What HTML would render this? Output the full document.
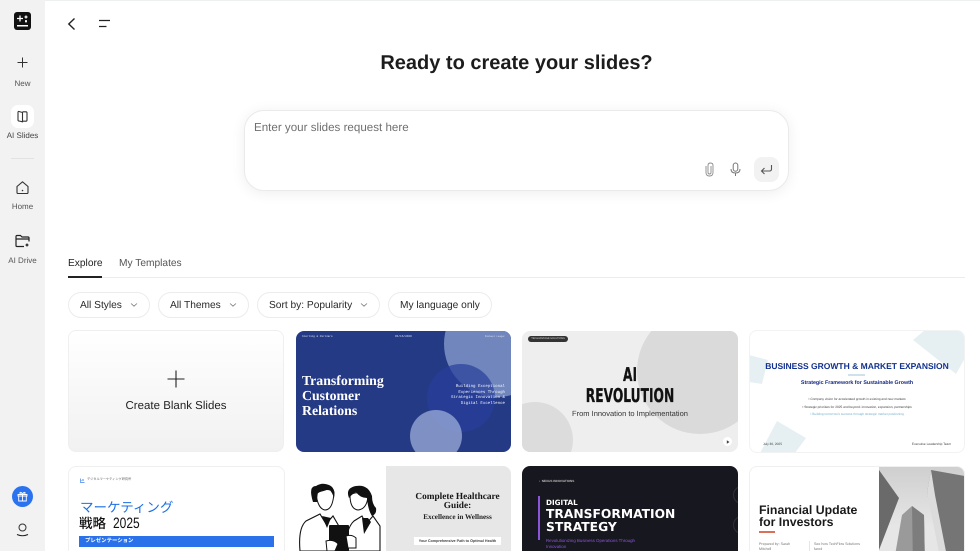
<!DOCTYPE html>
<html lang="en"><head><meta charset="utf-8"><title>AI Slides</title>
<style>
*{box-sizing:border-box;margin:0;padding:0}
html,body{width:980px;height:551px;overflow:hidden;background:#fff}
#page{position:relative;width:980px;height:551px;overflow:hidden;background:#fff;font-family:"Liberation Sans","Noto Sans CJK JP",sans-serif;color:#222;text-rendering:geometricPrecision}
.a{position:absolute;white-space:nowrap}
#side{position:absolute;left:0;top:0;width:45px;height:551px;background:#f2f2f2}
.lab{position:absolute;width:45px;text-align:center;font-size:8px;color:#555;line-height:10px;left:0}
.pill{position:absolute;top:292px;height:26px;border:1px solid #ececec;border-radius:13px;font-size:10.2px;line-height:25px;color:#2a2a2a;background:#fff;padding-left:11px;white-space:nowrap}
.pill svg{position:absolute;top:9px}
.card{position:absolute;overflow:hidden;border-radius:8px}
.card .a{line-height:1}
svg{position:absolute;display:block;overflow:visible}
</style></head><body><div id="page">
<div class="a" style="left:0;top:0;width:980px;height:1px;background:#eef0f0"></div>
<div id="side"></div>

<!-- logo -->
<svg style="left:14px;top:12px" width="17" height="18" viewBox="0 0 17 18"><rect width="17" height="18" rx="3" fill="#111"/><path d="M6 3.500v6M3 6.500h6M12 3.500v3M10.500 5h3M12 8v2.500M11 9.200h2" stroke="#fff" stroke-width="1.300"/><rect x="3" y="13" width="11" height="1.500" fill="#fff"/></svg>
<!-- new -->
<svg style="left:16px;top:56px" width="13" height="13"><path d="M6.500 1.500v10M1.500 6.500h10" stroke="#333" stroke-width="1"/></svg>
<div class="lab" style="top:79px">New</div>
<div class="a" style="left:11px;top:105px;width:23px;height:23px;background:#fff;border-radius:7px"></div>
<svg style="left:16px;top:110px" width="13" height="13" viewBox="0 0 13 13"><path d="M6.500 2.500L3 1.500Q2 1.300 2 2.500V10Q2 11 3 11L6.500 11.800ZM6.500 1.800H10Q11 1.800 11 3V10Q11 11.200 10 11.200H6.500" fill="none" stroke="#333" stroke-width="1.100"/></svg>
<div class="lab" style="top:131px;color:#444">AI Slides</div>
<div class="a" style="left:11px;top:158px;width:23px;height:1px;background:#e2e2e2"></div>
<svg style="left:15px;top:180px" width="15" height="15" viewBox="0 0 15 15"><path d="M2 6.500L7.500 1.800L13 6.500V12.500Q13 13.500 12 13.500H3Q2 13.500 2 12.500Z" fill="none" stroke="#333" stroke-width="1.100"/><circle cx="7.500" cy="10.500" r=".8" fill="#333"/></svg>
<div class="lab" style="top:202px">Home</div>
<svg style="left:15px;top:234px" width="15" height="14" viewBox="0 0 15 14"><path d="M1 11.500V2.500Q1 1.500 2 1.500H5.500L7 3H13Q14 3 14 4V7.500M1 5H14M1 11.500Q1 12.500 2 12.500H9" fill="none" stroke="#222" stroke-width="1.200"/><path d="M12 9l.7 1.300 1.300.7-1.300.7-.7 1.300-.7-1.300-1.300-.7 1.300-.7z" fill="#222"/></svg>
<div class="lab" style="top:256px">AI Drive</div>
<div class="a" style="left:12px;top:486px;width:21px;height:21px;border-radius:50%;background:#2b73ee"></div>
<svg style="left:16px;top:490px" width="13" height="13" viewBox="0 0 13 13"><path d="M2 4.500H11V6H2ZM2.700 6V11H10.300V6M6.500 4.500V11M6.500 4.500Q3.500 4.500 4 2.500Q5.500 1.800 6.500 4.500Q7.500 1.800 9 2.500Q9.500 4.500 6.500 4.500" fill="none" stroke="#fff" stroke-width=".9"/></svg>
<svg style="left:16px;top:522px" width="13" height="16" viewBox="0 0 13 16"><circle cx="6.500" cy="5.500" r="3.500" fill="none" stroke="#333" stroke-width="1"/><path d="M1 12.500Q6.500 15 12 12.500" fill="none" stroke="#222" stroke-width="1.100"/></svg>

<!-- top nav -->
<svg style="left:67px;top:17px" width="10" height="14"><path d="M7.500 1.500L1.800 7L7.500 12.500" fill="none" stroke="#222" stroke-width="1.400"/></svg>
<svg style="left:98px;top:19px" width="13" height="10"><path d="M1 1.500H12M1 7.500H8.500" stroke="#222" stroke-width="1.300"/></svg>

<div class="a" style="left:0;width:1033px;top:51px;text-align:center;font-size:20px;font-weight:bold;line-height:24px;color:#1c1c1c">Ready to create your slides?</div>

<!-- prompt -->
<div class="a" style="left:244px;top:110px;width:545px;height:81px;border:1px solid #eaeaea;border-radius:20px;background:#fff;box-shadow:0 2px 14px rgba(0,0,0,.07)"></div>
<div class="a" style="left:254px;top:120px;font-size:11.6px;line-height:15px;color:#6f6f6f">Enter your slides request here</div>
<svg style="left:703px;top:162px" width="13" height="15" viewBox="0 0 13 15"><path d="M3 4V10.500Q3 14 6.500 14Q10 14 10 10.500V3.500Q10 1 7.500 1Q5 1 5 3.500V10.500Q5 12 6.500 12Q8 12 8 10.500V4" fill="none" stroke="#8b8b8b" stroke-width=".9"/></svg>
<svg style="left:729px;top:162px" width="13" height="15" viewBox="0 0 13 15"><rect x="4.200" y="1" width="4.600" height="8.200" rx="2.300" fill="none" stroke="#777" stroke-width="1"/><path d="M2 7Q2 11 6.500 11Q11 11 11 7M6.500 11V14" fill="none" stroke="#777" stroke-width="1"/></svg>
<div class="a" style="left:754px;top:157px;width:25px;height:25px;border-radius:8px;background:#f2f2f2"></div>
<svg style="left:760px;top:163px" width="13" height="13" viewBox="0 0 13 13"><path d="M11.500 2V6Q11.500 8 9.500 8H1.500M4.500 5L1.500 8L4.500 11" fill="none" stroke="#555" stroke-width="1.100"/></svg>

<!-- tabs -->
<div class="a" style="left:68px;top:257px;font-size:10.200px;line-height:13px;color:#222">Explore</div>
<div class="a" style="left:119px;top:257px;font-size:10.200px;line-height:13px;color:#555">My Templates</div>
<div class="a" style="left:68px;top:277px;width:897px;height:1px;background:#ececec"></div>
<div class="a" style="left:68px;top:276px;width:34px;height:2px;background:#222"></div>

<!-- filters -->
<div class="pill" style="left:68px;width:82px">All Styles<svg style="left:61px" width="8" height="6"><path d="M1 1.500L4 4.200L7 1.500" fill="none" stroke="#777" stroke-width=".8"/></svg></div>
<div class="pill" style="left:158px;width:91px">All Themes<svg style="left:70px" width="8" height="6"><path d="M1 1.500L4 4.200L7 1.500" fill="none" stroke="#777" stroke-width=".8"/></svg></div>
<div class="pill" style="left:257px;width:123px">Sort by: Popularity<svg style="left:102px" width="8" height="6"><path d="M1 1.500L4 4.200L7 1.500" fill="none" stroke="#777" stroke-width=".8"/></svg></div>
<div class="pill" style="left:388px;width:104px;padding-left:11px">My language only</div>

<!-- blank -->
<div class="card" style="left:68px;top:330px;width:216px;height:122px;border:1px solid #efefef;background:linear-gradient(#fff,#f1f1f1)"></div>
<svg style="left:167px;top:370px" width="18" height="18"><path d="M9 .5V17.500M.5 9H17.500" stroke="#222" stroke-width="1.100"/></svg>
<div class="a" style="left:68px;width:216px;top:399px;text-align:center;font-size:11.500px;line-height:15px;color:#222">Create Blank Slides</div>

<!-- card 2 -->
<div class="card" style="left:296px;top:331px;width:215px;height:121px;background:#253a85">
  <div class="a" style="left:148px;top:-40px;width:106px;height:106px;border-radius:50%;background:#7086bd"></div>
  <div class="a" style="left:131px;top:33px;width:68px;height:68px;border-radius:50%;background:rgba(40,62,155,.7)"></div>
  <div class="a" style="left:114px;top:79px;width:52px;height:52px;border-radius:50%;background:rgba(170,185,225,.68)"></div>
  <div class="a" style="left:6px;top:4px;font:2.700px 'Liberation Mono',monospace;color:#dfe5f5">Sterling &amp; Partners</div>
  <div class="a" style="left:99px;top:4px;font:2.800px 'Liberation Mono',monospace;color:#dfe5f5">05/15/2030</div>
  <div class="a" style="right:6px;top:4px;font:2.400px 'Liberation Mono',monospace;color:#dfe5f5">Michael Langer</div>
  <div class="a" style="left:6px;top:42px;font:bold 13.800px/15px 'Liberation Serif',serif;color:#fff">Transforming<br>Customer<br>Relations</div>
  <div class="a" style="right:6px;top:54px;text-align:right;font:4.100px/5.700px 'Liberation Mono',monospace;color:#eef1fb">Building Exceptional<br>Experiences Through<br>Strategic Innovation &amp;<br>Digital Excellence</div>
</div>

<!-- card 3 -->
<div class="card" style="left:522px;top:331px;width:216px;height:121px;background:#eeeeee">
  <div class="a" style="left:115px;top:-23px;width:126px;height:126px;border-radius:50%;background:#dadada"></div>
  <div class="a" style="left:-25px;top:71px;width:76px;height:76px;border-radius:50%;background:#dcdcdc"></div>
  <div class="a" style="left:6px;top:5px;width:40px;height:6px;border-radius:3px;background:#333;color:#ddd;font-size:2.500px;line-height:6px;text-align:center">TECHVANTAGE SOLUTIONS</div>
  <div class="a" style="left:0;width:216px;top:34px;text-align:center;font:bold 19px/21px 'DejaVu Sans',sans-serif;color:#111;transform:scaleX(.645);-webkit-text-stroke:.3px #111">AI<br>REVOLUTION</div>
  <div class="a" style="left:0;width:216px;top:78px;text-align:center;font-size:7.500px;line-height:9px;color:#333">From Innovation to Implementation</div>
  <div class="a" style="left:201px;top:106px;width:9px;height:9px;border-radius:50%;background:#fff"></div>
  <svg style="left:204px;top:109px" width="4" height="4"><path d="M.8 .2L3.500 2L.8 3.800Z" fill="#444"/></svg>
</div>

<!-- card 4 -->
<div class="card" style="left:749px;top:330px;width:216px;height:123px;background:#fff;border:1px solid #f2f2f2">
  <svg style="left:0;top:0" width="214" height="121"><path d="M163 9L175 -1H215V27L206 43ZM-1 24L18 29L12 53L-1 51ZM27 90L56 107L45 122H10Z" fill="#e6f0f3"/></svg>
  <div class="a" style="left:0;width:214px;top:30px;text-align:center;font:bold 8.500px/11px 'Liberation Sans',sans-serif;color:#12318f">BUSINESS GROWTH &amp; MARKET EXPANSION</div>
  <div class="a" style="left:98px;top:43px;width:17px;height:2px;background:#cfe2ea"></div>
  <div class="a" style="left:0;width:214px;top:48px;text-align:center;font:bold 5.300px/8px 'Liberation Sans',sans-serif;color:#12267f">Strategic Framework for Sustainable Growth</div>
  <div class="a" style="left:0;width:214px;top:66px;text-align:center;font-size:3.200px;line-height:5px;color:#444">• Company vision for accelerated growth in existing and new markets</div>
  <div class="a" style="left:0;width:214px;top:74px;text-align:center;font-size:3.200px;line-height:5px;color:#444">• Strategic priorities for 2025 and beyond: innovation, expansion, partnerships</div>
  <div class="a" style="left:0;width:214px;top:81px;text-align:center;font-size:3.200px;line-height:5px;color:#7ab2d0">• Building tomorrow's success through strategic market positioning</div>
  <div class="a" style="left:13px;top:111.500px;font-size:3.200px;color:#444">July 30, 2025</div>
  <div class="a" style="right:13px;top:111.500px;font-size:3.200px;color:#444">Executive Leadership Team</div>
</div>

<!-- card 5 -->
<div class="card" style="left:68px;top:466px;width:217px;height:100px;background:#fff;border:1px solid #f0f0f0">
  <svg style="left:11px;top:11px" width="5" height="5"><path d="M.5 .5V4.500H4.500M1.500 3L3 1.500 3.800 2.500" fill="none" stroke="#3b82ee" stroke-width=".7"/></svg>
  <div class="a" style="left:18px;top:11px;font-size:3.200px;color:#666">デジタルマーケティング研究所</div>
  <div class="a" style="left:11px;top:32px;font-size:13.500px;line-height:18px;color:#1c6fe8">マーケティング</div>
  <div class="a" style="left:10px;top:48px;font-size:13.500px;line-height:18px;color:#111;font-weight:500">戦略<span style="display:inline-block;font-size:15px;transform:scaleX(.8);transform-origin:0 50%;margin-left:7px">2025</span></div>
  <div class="a" style="left:10px;top:69px;width:195px;height:11px;background:#2b72ea;color:#fff;font-size:5.400px;font-weight:bold;line-height:11px;padding-left:6px">プレゼンテーション</div>
</div>

<!-- card 6 -->
<div class="card" style="left:296px;top:466px;width:215px;height:100px;background:#fff">
  <div class="a" style="left:90px;top:0;width:125px;height:100px;background:#e7e7e7"></div>
  <svg style="left:0;top:0" width="90" height="85" viewBox="0 0 90 85">
    <path d="M4 85Q2 62 10 55L24 48L30 58L37 50L44 62L44 85Z" fill="#fff" stroke="#111" stroke-width="1.100"/>
    <path d="M49 85Q50 62 58 55L66 50L70 58L77 50L84 60L84 85Z" fill="#fff" stroke="#111" stroke-width="1.100"/>
    <path d="M26 50L31 62L35 52ZM66 52L68 68L75 56L72 52Z" fill="#111"/>
    <path d="M20 28Q22 43 29 44Q37 44 38 26Q30 20 20 28Z" fill="#fff" stroke="#111" stroke-width="1"/>
    <path d="M17 36Q12 20 20 20Q26 16 33 19Q40 22 38 32Q36 26 33 23Q26 26 22 26Q21 32 21 36Z" fill="#111"/>
    <path d="M54 29Q54 43 62 44Q71 43 72 30Q62 24 54 29Z" fill="#fff" stroke="#111" stroke-width="1"/>
    <path d="M53 32Q49 22 60 20Q72 18 76 30Q76 38 80 42Q81 48 76 50Q72 44 71 32Q64 32 60 26Q56 28 53 32Z" fill="#111"/>
    <rect x="33" y="59" width="20" height="26" rx="1" fill="#111"/>
    <path d="M30 75Q38 73 42 78L39 85H31ZM50 70Q56 68 60 72L60 82L52 82Z" fill="#fff" stroke="#111" stroke-width="1"/>
  </svg>
  <div class="a" style="left:99px;top:27px;width:125px;text-align:center;font:bold 9.300px/8.500px 'Liberation Serif',serif;color:#151515">Complete Healthcare<br>Guide:</div>
  <div class="a" style="left:99px;top:47px;width:125px;text-align:center;font:bold 7.200px/8px 'Liberation Serif',serif;color:#222">Excellence in Wellness</div>
  <div class="a" style="left:118px;top:71px;width:87px;height:8px;background:#fff;text-align:center;font-size:3.700px;font-weight:bold;line-height:8px;color:#444">Your Comprehensive Path to Optimal Health</div>
</div>

<!-- card 7 -->
<div class="card" style="left:522px;top:466px;width:216px;height:100px;background:#17171f">
  <div class="a" style="left:17px;top:14px;font-size:3.100px;font-weight:bold;color:#bbb">‹ &nbsp;NEXUS INNOVATIONS</div>
  <div class="a" style="left:16px;top:30px;width:2px;height:44px;background:#8a55d8"></div>
  <div class="a" style="left:24px;top:32px;font:bold 7.200px/9px 'DejaVu Sans',sans-serif;color:#fff">DIGITAL</div>
  <div class="a" style="left:24px;top:42px;font:bold 12.300px/13px 'DejaVu Sans',sans-serif;color:#fff">TRANSFORMATION<br>STRATEGY</div>
  <div class="a" style="left:24px;top:72px;font-size:4.400px;line-height:5.500px;color:#8a55d8">Revolutionizing Business Operations Through<br>Innovation</div>
  <div class="a" style="left:211px;top:20px;width:18px;height:18px;border:1px solid #30303a;border-radius:50%"></div>
  <div class="a" style="left:211px;top:50px;width:18px;height:18px;border:1px solid #30303a;border-radius:50%"></div>
</div>

<!-- card 8 -->
<div class="card" style="left:749px;top:466px;width:216px;height:100px;background:#fff;border:1px solid #f0f0f0">
  <div class="a" style="left:9px;top:37px;font:bold 12.300px/12px 'Liberation Sans',sans-serif;color:#1a1a1a">Financial Update<br>for Investors</div>
  <div class="a" style="left:9px;top:64px;width:16px;height:1.500px;background:#d9705a"></div>
  <div class="a" style="left:9px;top:74.500px;font-size:3.600px;line-height:5px;color:#777">Prepared by: Sarah<br>Mitchell</div>
  <div class="a" style="left:59px;top:74px;width:1px;height:16px;background:#e6e6e6"></div>
  <div class="a" style="left:64px;top:74.500px;font-size:3.600px;line-height:5px;color:#777">See how TechFlow Solutions<br>fared</div>
  <svg style="left:129px;top:0" width="86" height="100" viewBox="0 0 86 100">
    <defs><linearGradient id="sky" x1="0" y1="0" x2="0" y2="1"><stop offset="0" stop-color="#cfcfcf"/><stop offset=".6" stop-color="#e6e6e6"/></linearGradient></defs>
    <rect width="86" height="100" fill="url(#sky)"/>
    <path d="M0 3L20 31L0 83Z" fill="#6a6a6a"/>
    <path d="M33 39L23 48L14 100H46L45 48Z" fill="#9a9a9a"/>
    <path d="M33 39L45 48L46 100H34Z" fill="#7d7d7d"/>
    <path d="M52 3L86 9V100H66L48 26Z" fill="#757575"/>
    <path d="M52 3L48 26L63 100H70L56 28Z" fill="#dcdcdc"/>
  </svg>
</div>
</div></body></html>
